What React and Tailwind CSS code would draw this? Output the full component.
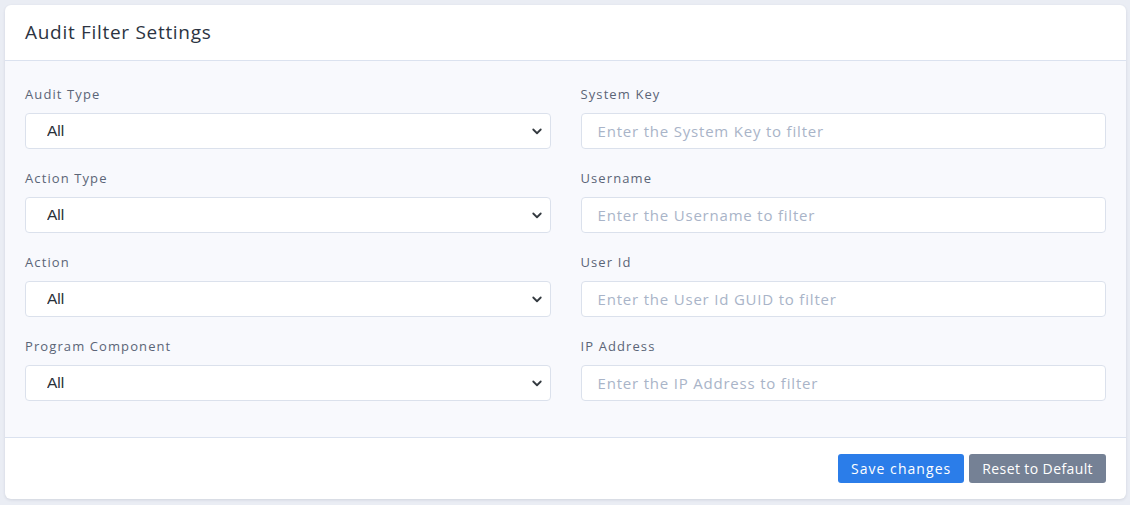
import React from 'react';

const selects = ['Audit Type', 'Action Type', 'Action', 'Program Component'];
const inputs = [
  { label: 'System Key', placeholder: 'Enter the System Key to filter' },
  { label: 'Username', placeholder: 'Enter the Username to filter' },
  { label: 'User Id', placeholder: 'Enter the User Id GUID to filter' },
  { label: 'IP Address', placeholder: 'Enter the IP Address to filter' },
];

const font = { fontFamily: '"Open Sans", "Noto Sans", sans-serif' };

const Chevron = () => (
  <svg className="pointer-events-none absolute right-[8px] top-1/2 -translate-y-1/2" width="12" height="12" viewBox="0 0 16 16" fill="none">
    <path d="M3 6l5 5 5-5" stroke="#343a40" strokeWidth="2.4" strokeLinecap="round" strokeLinejoin="round" />
  </svg>
);

const App = () => {
  return (
    <div className="min-h-[505px] bg-[#eaedf4] pt-[5px] pb-[5px] pl-[5px] pr-[4px]" style={font}>
      <div className="rounded-md bg-white shadow-[0_1px_3px_rgba(30,41,70,0.12)] overflow-hidden">
        <div className="h-[56px] flex items-center px-[20px] border-b border-[#dbe2ef]">
          <h1 className="text-[19px] font-medium text-[#2c3442] tracking-[0.7px]">Audit Filter Settings</h1>
        </div>

        <div className="bg-[#f8f9fd] px-[20px] pt-[23px] pb-[36px] border-b border-[#dbe2ef]">
          <div className="grid grid-cols-2 gap-x-[30px] gap-y-[19px]">
            {selects.map((label, i) => (
              <React.Fragment key={label}>
                <div>
                  <label className="block text-[13px] text-[#5b6577] mb-[9px] leading-[20px] tracking-[1.1px]">{label}</label>
                  <div className="relative">
                    <select
                      className="appearance-none w-full h-[36px] rounded-[4px] border border-[#dbe1ec] bg-white pl-[21px] text-[15.5px] text-[#2a2f38] outline-none"
                      style={{ fontFamily: '"Liberation Sans", Arial, sans-serif' }}
                      defaultValue="All"
                    >
                      <option>All</option>
                    </select>
                    <Chevron />
                  </div>
                </div>
                <div>
                  <label className="block text-[13px] text-[#5b6577] mb-[9px] leading-[20px] tracking-[1.1px]">{inputs[i].label}</label>
                  <input
                    className="w-full h-[36px] rounded-[4px] border border-[#dbe1ec] bg-white px-[16px] text-[15px] tracking-[0.8px] text-[#2a2f38] placeholder:text-[#a9b4c8] outline-none"
                    placeholder={inputs[i].placeholder}
                  />
                </div>
              </React.Fragment>
            ))}
          </div>
        </div>

        <div className="h-[61px] flex items-center justify-end gap-[5px] px-[20px]">
          <button className="h-[29px] px-[13px] rounded-[3px] bg-[#2b7de9] text-white text-[14px] tracking-[1.05px]">Save changes</button>
          <button className="h-[29px] px-[13px] rounded-[3px] bg-[#758195] text-white text-[14px] tracking-[0.4px]">Reset to Default</button>
        </div>
      </div>
    </div>
  );
};

export default App;
